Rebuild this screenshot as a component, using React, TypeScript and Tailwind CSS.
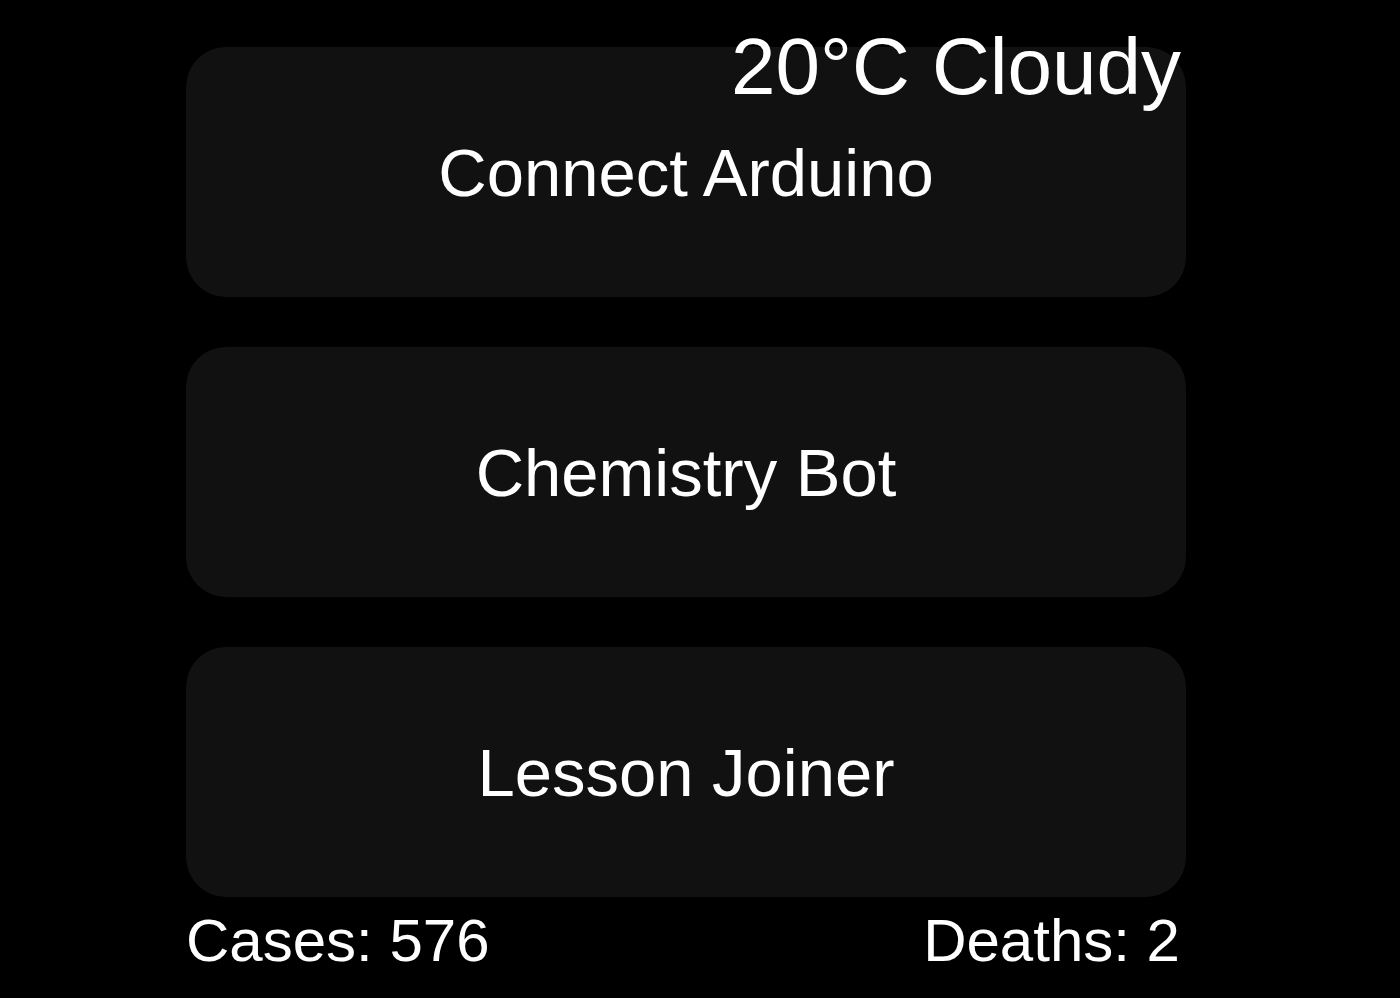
import React from "react";

const tools = ["Connect Arduino", "Chemistry Bot", "Lesson Joiner"];

export default function App() {
  return (
    <div
      className="relative min-h-[998px] w-full bg-black text-white"
      style={{ fontFamily: '"Liberation Sans", Arial, sans-serif' }}
    >
      <div className="absolute left-[186px] top-[21px] w-[995px] text-right text-[80px] leading-[92px]">
        20°C Cloudy
      </div>
      <div className="ml-[186px] flex w-[1000px] flex-col pt-[47px]">
        <div className="flex flex-col gap-[50px]">
          {tools.map((t) => (
            <button
              key={t}
              className="flex h-[250px] w-full items-center justify-center rounded-[40px] bg-[#111111] text-[67px] leading-none text-white"
            >
              {t}
            </button>
          ))}
        </div>
        <div className="mt-[10px] flex justify-between pr-[6px] text-[60px] leading-[67px]">
          <span>Cases: 576</span>
          <span>Deaths: 2</span>
        </div>
      </div>
    </div>
  );
}
